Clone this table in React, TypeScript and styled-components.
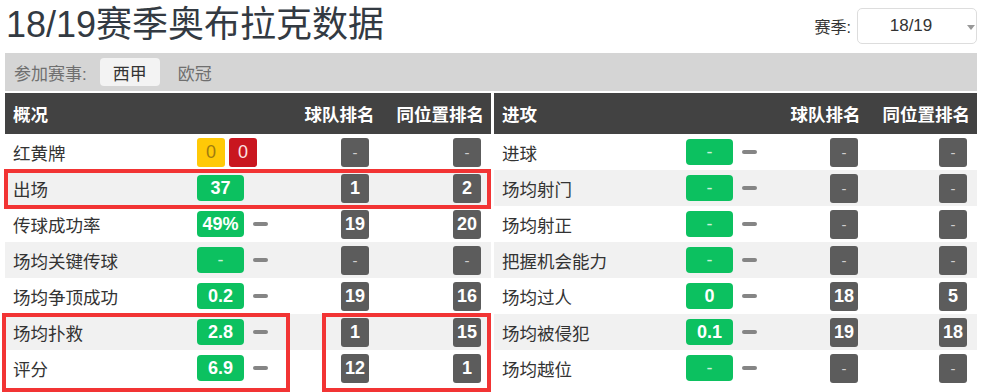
import React from "react"
import styled, { createGlobalStyle } from "styled-components"

const GlobalStyle = createGlobalStyle`
    html, body {
        margin: 0;
        padding: 0;
        background: #ffffff;
    }
    body {
        font-family: "Liberation Sans", "Noto Sans CJK SC", sans-serif;
        color: #333333;
    }
`;

type Stat = {
    label: string,
    value?: string,
    cards?: [string, string],
    team: string,
    pos: string,
    dash?: boolean,
}

const overview: Stat[] = [
    { label: "红黄牌", cards: ["0", "0"], team: "-", pos: "-" },
    { label: "出场", value: "37", team: "1", pos: "2" },
    { label: "传球成功率", value: "49%", team: "19", pos: "20", dash: true },
    { label: "场均关键传球", value: "-", team: "-", pos: "-", dash: true },
    { label: "场均争顶成功", value: "0.2", team: "19", pos: "16", dash: true },
    { label: "场均扑救", value: "2.8", team: "1", pos: "15", dash: true },
    { label: "评分", value: "6.9", team: "12", pos: "1", dash: true },
]

const attack: Stat[] = [
    { label: "进球", value: "-", team: "-", pos: "-", dash: true },
    { label: "场均射门", value: "-", team: "-", pos: "-", dash: true },
    { label: "场均射正", value: "-", team: "-", pos: "-", dash: true },
    { label: "把握机会能力", value: "-", team: "-", pos: "-", dash: true },
    { label: "场均过人", value: "0", team: "18", pos: "5", dash: true },
    { label: "场均被侵犯", value: "0.1", team: "19", pos: "18", dash: true },
    { label: "场均越位", value: "-", team: "-", pos: "-", dash: true },
]

const StatTable = ({ title, rows }: { title: string, rows: Stat[] }) => (
    <STable>
        <SHead>
            <SHeadTitle>{title}</SHeadTitle>
            <SHeadCol>球队排名</SHeadCol>
            <SHeadCol>同位置排名</SHeadCol>
        </SHead>
        {rows.map((row, i) => (
            <SRow key={row.label} $striped={i % 2 === 1}>
                <SLabel>{row.label}</SLabel>
                <SValueCell>
                    {row.cards ? (
                        <>
                            <SCard $kind="yellow">{row.cards[0]}</SCard>
                            <SCard $kind="red">{row.cards[1]}</SCard>
                        </>
                    ) : (
                        <SGreen $empty={row.value === "-"}>{row.value}</SGreen>
                    )}
                    {row.dash && <SDash />}
                </SValueCell>
                <SRank $empty={row.team === "-"}>{row.team}</SRank>
                <SRankEnd $empty={row.pos === "-"}>{row.pos}</SRankEnd>
            </SRow>
        ))}
    </STable>
)

export default function App() {
    return (
        <SPage>
            <GlobalStyle />
            <STop>
                <STitle>18/19赛季奥布拉克数据</STitle>
                <SSeason>
                    <SSeasonLabel>赛季:</SSeasonLabel>
                    <SSelect>
                        18/19
                        <SCaret />
                    </SSelect>
                </SSeason>
            </STop>
            <STabs>
                <STabLabel>参加赛事:</STabLabel>
                <STab $active>西甲</STab>
                <STab>欧冠</STab>
            </STabs>
            <SGrid>
                <StatTable title="概况" rows={overview} />
                <StatTable title="进攻" rows={attack} />
            </SGrid>
            <SMark style={{ left: 4, top: 169, width: 487, height: 40 }} />
            <SMark style={{ left: 2, top: 313, width: 288, height: 79 }} />
            <SMark style={{ left: 322, top: 313, width: 169, height: 79 }} />
        </SPage>
    )
}

const SPage = styled.div`
    position: relative;
    width: 987px;
    height: 392px;
    padding-left: 5px;
    box-sizing: border-box;
    overflow: hidden;
`;

const STop = styled.div`
    display: flex;
    justify-content: space-between;
    align-items: flex-start;
    width: 972px;
    height: 53px;
`;

const STitle = styled.h1`
    margin: 3px 0 0 1px;
    font-size: 36px;
    line-height: 44px;
    font-weight: normal;
    color: #333a42;
`;

const SSeason = styled.div`
    display: flex;
    align-items: center;
    margin-top: 8px;
`;

const SSeasonLabel = styled.span`
    font-size: 16px;
    color: #333;
    margin-right: 6px;
`;

const SSelect = styled.div`
    position: relative;
    width: 106px;
    height: 34px;
    padding-right: 12px;
    border: 1px solid #dddddd;
    border-radius: 5px;
    display: flex;
    align-items: center;
    justify-content: center;
    font-size: 17px;
    color: #333;
`;

const SCaret = styled.span`
    position: absolute;
    right: 1px;
    top: 16px;
    border-left: 4px solid transparent;
    border-right: 4px solid transparent;
    border-top: 5px solid #999;
`;

const STabs = styled.div`
    display: flex;
    align-items: center;
    width: 972px;
    height: 38px;
    background: #d5d5d5;
    box-sizing: border-box;
    padding-left: 9px;
`;

const STabLabel = styled.span`
    font-size: 17px;
    color: #6f6f6f;
    margin-right: 13px;
`;

const STab = styled.span<{ $active?: boolean }>`
    display: flex;
    align-items: center;
    height: 28px;
    padding: 0 13px;
    margin-right: 5px;
    border-radius: 4px;
    font-size: 17px;
    color: ${p => p.$active ? "#333" : "#6f6f6f"};
    background: ${p => p.$active ? "#f3f3f3" : "transparent"};
`;

const SGrid = styled.div`
    display: grid;
    grid-template-columns: 486px 483px;
    column-gap: 3px;
    width: 972px;
    margin-top: 2px;
`;

const STable = styled.div`
    display: flex;
    flex-direction: column;
`;

const SHead = styled.div`
    display: flex;
    align-items: center;
    height: 41px;
    background: #424242;
    color: #ffffff;
    font-size: 17.5px;
    font-weight: bold;
    padding: 0 7px 0 8px;
    gap: 22px;
`;

const SHeadTitle = styled.span`
    flex: 1;
`;

const SHeadCol = styled.span``;

const SRow = styled.div<{ $striped: boolean }>`
    display: grid;
    grid-template-columns: 184px 144px 28px 1fr;
    align-items: center;
    height: 36px;
    padding: 0 10px 0 8px;
    background: ${p => p.$striped ? "#f1f1f1" : "#ffffff"};
`;

const SLabel = styled.span`
    font-size: 17.5px;
    color: #333;
    white-space: nowrap;
`;

const SValueCell = styled.div`
    display: flex;
    align-items: center;
    gap: 4px;
`;

const SBadge = styled.span`
    display: flex;
    align-items: center;
    justify-content: center;
    border-radius: 3px;
    font-weight: bold;
    font-size: 18px;
    color: #ffffff;
    box-sizing: border-box;
`;

const SGreen = styled(SBadge)<{ $empty: boolean }>`
    width: 47px;
    height: 26px;
    border-radius: 4px;
    background: #0cc160;
    color: ${p => p.$empty ? "#c8f0d8" : "#ffffff"};
    font-weight: ${p => p.$empty ? "normal" : "bold"};
`;

const SCard = styled(SBadge)<{ $kind: "yellow" | "red" }>`
    width: 28px;
    height: 29px;
    background: ${p => p.$kind === "yellow" ? "#ffc907" : "#c9161f"};
    color: ${p => p.$kind === "yellow" ? "#a07c10" : "#fbe3e3"};
    font-weight: normal;
`;

const SDash = styled.span`
    width: 15px;
    height: 4px;
    border-radius: 2px;
    background: #858585;
    margin-left: 5px;
`;

const SRank = styled(SBadge)<{ $empty: boolean }>`
    width: 28px;
    height: 29px;
    background: #5c5c5c;
    color: ${p => p.$empty ? "#cfcfcf" : "#ffffff"};
    font-weight: ${p => p.$empty ? "normal" : "bold"};
    font-size: ${p => p.$empty ? "15px" : "18px"};
`;

const SRankEnd = styled(SRank)`
    justify-self: end;
`;

const SMark = styled.div`
    position: absolute;
    border: 4px solid #f23434;
    box-sizing: border-box;
    pointer-events: none;
`;
